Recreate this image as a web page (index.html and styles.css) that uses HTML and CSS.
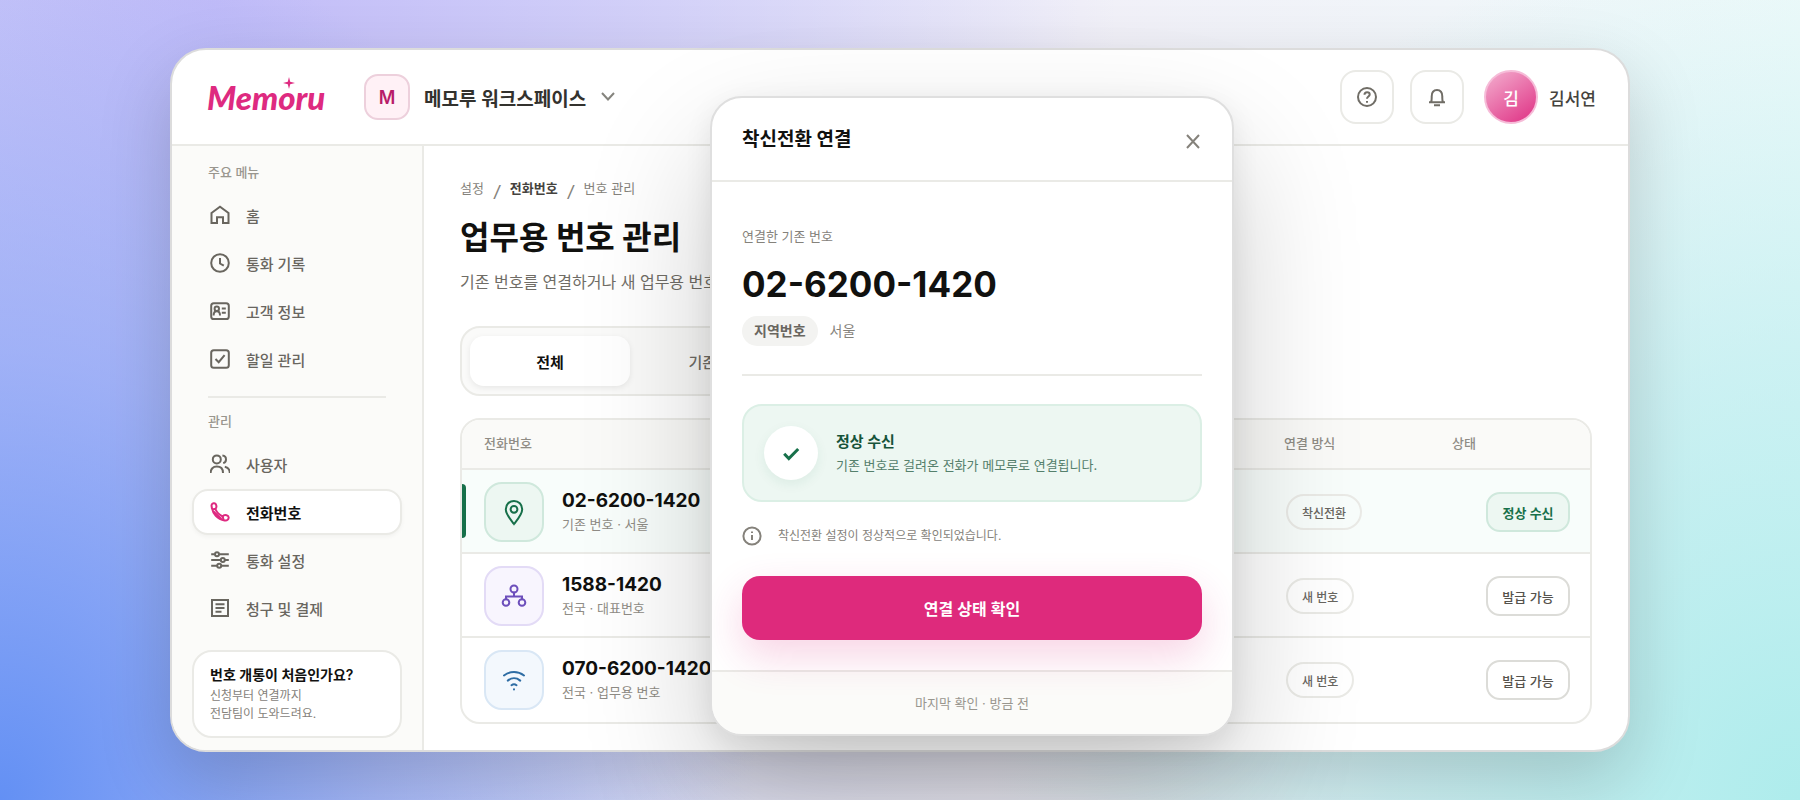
FILE: index.html
```html
<!DOCTYPE html>
<html lang="ko">
<head>
    <meta charset="UTF-8">
    <meta name="viewport" content="width=device-width, initial-scale=1.0">
    <title>Memoru</title>
    <link rel="stylesheet" href="styles.css">
</head>
<body>

    <div class="window">
        <header class="topbar">
            <a class="logo" href="#">Mem<span class="logo-o">o<svg class="spark" viewBox="0 0 12 12"><path d="M6 0 7.200 4.800 12 6 7.200 7.200 6 12 4.800 7.200 0 6 4.800 4.800z"/></svg></span>ru</a>
            <button class="workspace" type="button">
                <span class="badge">M</span>
                <span>메모루 워크스페이스</span>
                <svg class="chevron" viewBox="0 0 16 16"><path d="M2 4 8 10.500 14 4"/></svg>
            </button>
            <div class="actions">
                <button class="icon-btn" type="button" aria-label="도움말">
                    <svg class="icon" viewBox="0 0 20 20"><circle cx="10" cy="10" r="9"/><path d="M7.500 7.800c0-1.500 1.100-2.500 2.600-2.500s2.600 1 2.600 2.300c0 1.900-2.700 2-2.700 4.100"/><path d="M10 14v1.800"/></svg>
                </button>
                <button class="icon-btn" type="button" aria-label="알림">
                    <svg class="icon" viewBox="0 0 20 20"><path d="M2 15.200h16M4 15c.9-1.500.7-3 .7-5.500C4.700 5.500 6.800 3 10 3s5.300 2.500 5.300 6.500c0 2.500-.2 4 .7 5.500M7 18.200h6"/></svg>
                </button>
                <a class="user" href="#"><span class="avatar">김</span>김서연</a>
            </div>
        </header>

        <div class="layout">
            <aside class="sidebar">
                <h2 class="menu-label">주요 메뉴</h2>
                <nav class="menu">
                    <a href="#"><svg class="icon" viewBox="0 0 20 20"><path d="M1.500 8 10 1.800 18.500 8v10H13v-5.800H7V18H1.500z"/></svg>홈</a>
                    <a href="#"><svg class="icon" viewBox="0 0 20 20"><circle cx="10" cy="10" r="8.800"/><path d="M10 5v5.500l3.800 2.200"/></svg>통화 기록</a>
                    <a href="#"><svg class="icon" viewBox="0 0 20 20"><rect x="1.200" y="2.200" width="17.600" height="15.800" rx="2.600"/><circle cx="6.800" cy="7.800" r="2.200"/><path d="M3.600 14.500c0-2.800 1.300-4.300 3.200-4.300s3.200 1.500 3.200 4.300M11.800 7.500h4M11.800 11.800h4"/></svg>고객 정보</a>
                    <a href="#"><svg class="icon" viewBox="0 0 20 20"><rect x="1.200" y="1.200" width="17.600" height="17.600" rx="2.600"/><path d="m5.500 10 3.200 3.200 5.900-7"/></svg>할일 관리</a>
                </nav>
                <hr>
                <h2 class="menu-label">관리</h2>
                <nav class="menu">
                    <a href="#"><svg class="icon" viewBox="0 0 20 20"><circle cx="6.800" cy="5.400" r="4"/><path d="M.6 19c0-4.200 2.500-6.400 6.200-6.400S13 14.800 13 19M12.400 1.600c2.200.2 3.600 1.800 3.600 3.800s-1.200 3.200-2.800 3.700M14.800 12.800c3.200.7 5 2.900 5 6.200"/></svg>사용자</a>
                    <a class="active" href="#"><svg class="icon" viewBox="0 0 20 20"><path d="M1.600 4.200c-.3-1.400.5-2.800 2-3 1.300-.2 2.300.6 2.700 2.200.4 1.700.1 2.700-1 3.500 1.400 3.300 4 6 7.400 7.600.9-1.500 2.200-1.700 3.900-1.200 1.600.5 2.300 1.500 2 2.800-.4 1.700-2 2.600-4 2.300C7.500 17.400 2.500 11.800 1.600 4.200z"/><path d="M2.500 7.200 5.300 6.900M12.700 14.500l.9 3.400M3.500 9.500l8 7.500"/></svg>전화번호</a>
                    <a href="#"><svg class="icon" viewBox="0 0 20 20"><path d="M1.200 4.200h3.600M9.200 4.200h9.600M1.200 10h9.400M15 10h3.800M1.200 15.800H7M11.400 15.800h7.400"/><circle cx="7" cy="4.200" r="2"/><circle cx="12.800" cy="10" r="2"/><circle cx="9.200" cy="15.800" r="2"/></svg>통화 설정</a>
                    <a href="#"><svg class="icon" viewBox="0 0 20 20"><path d="M2 2h16v16H2zM5.500 6.300h9M5.500 10h9M5.500 13.700h6"/></svg>청구 및 결제</a>
                </nav>
                <a class="help-card" href="#">
                    <strong>번호 개통이 처음인가요?</strong>
                    <span>신청부터 연결까지<br>전담팀이 도와드려요.</span>
                </a>
            </aside>

            <main class="content">
                <nav class="breadcrumb"><a href="#">설정</a><i>/</i><a class="current" href="#">전화번호</a><i>/</i><a href="#">번호 관리</a></nav>
                <h1>업무용 번호 관리</h1>
                <p class="lead">기존 번호를 연결하거나 새 업무용 번호를 신청하세요.</p>
                <div class="tabs">
                    <button class="tab selected" type="button">전체</button>
                    <button class="tab" type="button">기존 번호</button>
                    <button class="tab" type="button">새 번호</button>
                </div>

                <table class="numbers">
                    <thead>
                        <tr><th>전화번호</th><th class="col-method">연결 방식</th><th class="col-status">상태</th></tr>
                    </thead>
                    <tbody>
                        <tr class="current-row">
                            <td>
                                <div class="number">
                                    <span class="tile green"><svg viewBox="0 0 28 28"><path d="M14 26C10.500 21.500 5.800 16.500 5.800 11.300 5.800 6.400 9.400 3 14 3s8.200 3.400 8.200 8.300C22.200 16.500 17.500 21.500 14 26z"/><circle cx="14" cy="11.300" r="3.400"/></svg></span>
                                    <div><strong>02-6200-1420</strong><small>기존 번호 · 서울</small></div>
                                </div>
                            </td>
                            <td><span class="pill">착신전환</span></td>
                            <td class="status"><button class="status-btn ok" type="button">정상 수신</button></td>
                        </tr>
                        <tr>
                            <td>
                                <div class="number">
                                    <span class="tile purple"><svg viewBox="0 0 28 28"><circle cx="14" cy="7" r="3.500"/><circle cx="6" cy="20.500" r="3.300"/><circle cx="22" cy="20.500" r="3.300"/><path d="M14 10.500v4M6 17.200v-2.700h16v2.700"/></svg></span>
                                    <div><strong>1588-1420</strong><small>전국 · 대표번호</small></div>
                                </div>
                            </td>
                            <td><span class="pill">새 번호</span></td>
                            <td class="status"><button class="status-btn" type="button">발급 가능</button></td>
                        </tr>
                        <tr>
                            <td>
                                <div class="number">
                                    <span class="tile blue"><svg viewBox="0 0 28 28"><path d="M4 9.500c6-4.600 14-4.600 20 0M7.800 14.600c3.700-3 8.700-3 12.400 0M11.500 19.200c1.500-1.200 3.500-1.200 5 0M14 23.200v.3"/></svg></span>
                                    <div><strong>070-6200-1420</strong><small>전국 · 업무용 번호</small></div>
                                </div>
                            </td>
                            <td><span class="pill">새 번호</span></td>
                            <td class="status"><button class="status-btn" type="button">발급 가능</button></td>
                        </tr>
                    </tbody>
                </table>
            </main>
        </div>

        <section class="modal" role="dialog" aria-labelledby="modal-title">
            <header class="modal-head">
                <h2 id="modal-title">착신전환 연결</h2>
                <button class="close" type="button" aria-label="닫기"><svg viewBox="0 0 18 18"><path d="m3 3 12 13M15 3 3 16"/></svg></button>
            </header>
            <div class="modal-body">
                <p class="field-label">연결한 기존 번호</p>
                <p class="big-number">02-6200-1420</p>
                <p class="region"><span>지역번호</span>서울</p>
                <div class="notice">
                    <span class="check"><svg viewBox="0 0 20 20"><path d="m3.200 10.800 4.600 4.800 9.400-9.600"/></svg></span>
                    <div>
                        <strong>정상 수신</strong>
                        <p>기존 번호로 걸려온 전화가 메모루로 연결됩니다.</p>
                    </div>
                </div>
                <p class="info"><svg viewBox="0 0 20 20"><circle cx="10" cy="10" r="8.600"/><path d="M10 9v5M10 5.500v1.500"/></svg>착신전환 설정이 정상적으로 확인되었습니다.</p>
                <button class="primary" type="button">연결 상태 확인</button>
            </div>
            <footer class="modal-foot">마지막 확인 · 방금 전</footer>
        </section>
    </div>

</body>
</html>
```
FILE: styles.css
```css
*{
    box-sizing: border-box;
    margin: 0;
}

body{
    min-height: 100vh;
    padding: 48px 170px;
    display: flex;
    font-family: Inter, "Noto Sans CJK KR", sans-serif;
    font-size: 15px;
    color: #11110f;
    background:
        radial-gradient(ellipse 42% 110% at 0% 100%, #6390f4 0%, rgba(130, 160, 245, 0.6) 50%, rgba(160, 170, 245, 0) 100%),
        radial-gradient(ellipse 45% 110% at 100% 100%, #aeecec 0%, rgba(180, 236, 238, 0.6) 50%, rgba(220, 245, 247, 0) 100%),
        radial-gradient(ellipse 50% 120% at 12% 0%, #c2bcf8 0%, rgba(200, 196, 248, 0.8) 35%, rgba(230, 228, 248, 0) 100%),
        linear-gradient(90deg, #d2d6fb 0%, #f1f0f8 60%, #f0fafa 100%);
}

a{
    color: inherit;
    text-decoration: none;
}

button{
    font: inherit;
    color: inherit;
    background: none;
    border: 0;
    padding: 0;
    cursor: pointer;
}

svg{
    fill: none;
    stroke: currentColor;
    stroke-width: 2;
    flex: none;
}

.icon{
    width: 20px;
    height: 20px;
}

.window{
    position: relative;
    flex: 1;
    display: flex;
    flex-direction: column;
    border: 2px solid #dcdcdc;
    border-radius: 36px;
    background: #fff;
    box-shadow: 0 28px 72px rgba(0, 0, 0, 0.18);
}

/* top bar */
.topbar{
    height: 96px;
    padding: 0 32px 0 35px;
    display: flex;
    align-items: center;
    border-bottom: 2px solid #eaeae6;
}

.logo{
    width: 157px;
    font-family: Lato, sans-serif;
    font-size: 33px;
    line-height: 40px;
    font-weight: 900;
    font-style: italic;
    color: #de2a80;
}

.logo-o{
    position: relative;
}

.spark{
    position: absolute;
    left: 5px;
    top: 0;
    width: 12px;
    height: 12px;
    fill: #de2a80;
    stroke: none;
}

.workspace{
    display: flex;
    align-items: center;
    gap: 14px;
    font-size: 19px;
    font-weight: 600;
    color: #33322e;
}

.badge{
    width: 46px;
    height: 46px;
    display: grid;
    place-items: center;
    border: 2px solid #edd0dc;
    border-radius: 14px;
    background: #fff1f6;
    font-size: 18px;
    color: #b81c69;
}

.chevron{
    width: 16px;
    height: 16px;
    color: #85847e;
}

.actions{
    margin-left: auto;
    display: flex;
    align-items: center;
    gap: 16px;
}

.icon-btn{
    width: 54px;
    height: 54px;
    display: grid;
    place-items: center;
    border: 2px solid #eaeae6;
    border-radius: 16px;
    color: #706d66;
}

.user{
    margin-left: 4px;
    display: flex;
    align-items: center;
    gap: 11px;
    font-size: 17px;
    font-weight: 500;
    color: #45433e;
}

.avatar{
    width: 54px;
    height: 54px;
    display: grid;
    place-items: center;
    border: 2px solid #f6bcd8;
    border-radius: 50%;
    background: linear-gradient(145deg, #f4b4d2, #de2a80);
    background-origin: border-box;
    color: #fff;
}

.layout{
    flex: 1;
    display: flex;
}

/* sidebar */
.sidebar{
    width: 252px;
    padding: 16px 20px 12px;
    display: flex;
    flex-direction: column;
    border-right: 2px solid #eaeae6;
    border-bottom-left-radius: 34px;
    background: #fbfbf9;
}

.menu-label{
    padding: 0 16px;
    margin-bottom: 10px;
    font-size: 13px;
    line-height: 20px;
    font-weight: 500;
    color: #99968e;
}

.menu{
    display: flex;
    flex-direction: column;
    gap: 2px;
}

.menu a{
    height: 46px;
    padding: 0 16px;
    display: flex;
    align-items: center;
    gap: 16px;
    border: 2px solid transparent;
    border-radius: 16px;
    font-weight: 500;
    color: #69665f;
}

.menu .active{
    background: #fff;
    border-color: #eaeae6;
    box-shadow: 0 2px 4px rgba(0, 0, 0, 0.04);
    font-weight: 600;
    color: #11110f;
}

.active .icon{
    color: #de2a80;
}

.sidebar hr{
    margin: 14px 16px 13px;
    border: 0;
    border-top: 2px solid #eaeae6;
}

.help-card{
    margin-top: auto;
    padding: 11px 16px 13px;
    display: block;
    border: 2px solid #eaeae6;
    border-radius: 20px;
    background: #fff;
    font-size: 12px;
    line-height: 18px;
    color: #85827b;
}

.help-card strong{
    display: block;
    font-size: 14px;
    line-height: 24px;
    font-weight: 600;
    color: #11110f;
}

/* main content */
.content{
    flex: 1;
    min-width: 0;
    padding: 32px 36px 26px;
}

.breadcrumb{
    display: flex;
    gap: 10px;
    font-size: 13px;
    line-height: 20px;
    color: #85827b;
}

.breadcrumb i{
    font-size: 16px;
    line-height: 26px;
    height: 20px;
    font-weight: 500;
}

.breadcrumb .current{
    font-weight: 600;
    color: #45433e;
}

h1{
    margin: 20px 0 12px;
    font-size: 32px;
    line-height: 40px;
    font-weight: 700;
}

.lead{
    font-size: 16px;
    line-height: 24px;
    color: #706d66;
}

.tabs{
    width: fit-content;
    margin: 32px 0 22px;
    padding: 8px;
    display: flex;
    gap: 8px;
    border: 2px solid #eaeae6;
    border-radius: 20px;
    background: #fafaf9;
}

.tab{
    width: 160px;
    height: 50px;
    border-radius: 14px;
    font-weight: 500;
    color: #706d66;
}

.selected{
    background: #fff;
    box-shadow: 0 2px 6px rgba(0, 0, 0, 0.08);
    font-weight: 600;
    color: #11110f;
}

.numbers{
    width: 100%;
    table-layout: fixed;
    border: 2px solid #eaeae6;
    border-radius: 20px;
    border-spacing: 0;
    overflow: hidden;
}

th{
    height: 50px;
    padding: 0 0 4px;
    border-bottom: 2px solid #eaeae6;
    background: #fafaf8;
    text-align: left;
    font-size: 13px;
    font-weight: 500;
    color: #8f8c85;
}

td{
    padding: 12px 0 10px;
    border-bottom: 2px solid #eaeae6;
}

th:first-child,
td:first-child{
    padding-left: 22px;
}

tr:last-child td{
    padding-bottom: 12px;
    border-bottom: 0;
}

.col-method{
    width: 168px;
}

.col-status{
    width: 138px;
}

.current-row td{
    position: relative;
    background: #f8fdfb;
}

.current-row td:first-child::before{
    content: "";
    position: absolute;
    left: 0;
    top: 14px;
    bottom: 14px;
    width: 4px;
    border-radius: 0 4px 4px 0;
    background: #17704a;
}

.number{
    display: flex;
    align-items: center;
    gap: 18px;
}

.number strong{
    display: block;
    font-size: 19px;
    line-height: 24px;
    font-weight: 700;
}

.number small{
    display: block;
    font-size: 13px;
    line-height: 22px;
    color: #8f8c85;
}

.tile{
    width: 60px;
    height: 60px;
    display: grid;
    place-items: center;
    border: 2px solid;
    border-radius: 18px;
}

.tile svg{
    width: 28px;
    height: 28px;
    stroke-linecap: round;
}

.green{
    background: #edf7f2;
    border-color: #cfe8dc;
    color: #17704a;
}

.purple{
    background: #f8f5fe;
    border-color: #e3dbf6;
    color: #6d4fbb;
}

.blue{
    background: #f3f8fd;
    border-color: #d9e7f5;
    color: #2e6da4;
}

.pill{
    height: 36px;
    padding: 0 14px;
    margin-left: 2px;
    display: inline-flex;
    align-items: center;
    border: 2px solid #eaeae6;
    border-radius: 18px;
    font-size: 12px;
    font-weight: 500;
    color: #69665f;
}

.status{
    padding-right: 20px;
    text-align: right;
}

.status-btn{
    width: 84px;
    height: 40px;
    border: 2px solid #dcdcd8;
    border-radius: 14px;
    background: #fff;
    font-size: 13px;
    font-weight: 500;
    color: #55524c;
}

.ok{
    background: #edf7f2;
    border-color: #cfe8dc;
    font-weight: 600;
    color: #17704a;
}

/* call forwarding dialog, floats over the window */
.modal{
    position: absolute;
    top: 46px;
    left: 538px;
    width: 524px;
    border: 2px solid #dfdfdf;
    border-radius: 32px;
    background: #fff;
    overflow: hidden;
    box-shadow: 0 56px 130px rgba(0, 0, 0, 0.2), 0 8px 28px rgba(0, 0, 0, 0.08);
}

.modal-head{
    height: 84px;
    padding: 0 30px;
    display: flex;
    align-items: center;
    justify-content: space-between;
    border-bottom: 2px solid #eaeae6;
}

.modal-head h2{
    padding-bottom: 4px;
    font-size: 19px;
    font-weight: 700;
}

.close{
    padding-top: 4px;
}

.close svg{
    display: block;
    width: 18px;
    height: 18px;
    color: #85827b;
}

.modal-body{
    padding: 43px 30px 30px;
}

.field-label{
    font-size: 13px;
    line-height: 22px;
    color: #85827b;
}

.big-number{
    margin: 15px 0 10px;
    font-size: 35px;
    line-height: 44px;
    font-weight: 700;
}

.region{
    padding-bottom: 28px;
    display: flex;
    align-items: center;
    gap: 12px;
    border-bottom: 2px solid #eaeae6;
    font-size: 14px;
    line-height: 30px;
    color: #85827b;
}

.region span{
    padding: 0 12px;
    border-radius: 15px;
    background: #f3f3f1;
    font-weight: 600;
    color: #69665f;
}

.notice{
    height: 98px;
    margin: 28px 0 24px;
    padding: 0 20px;
    display: flex;
    align-items: center;
    gap: 18px;
    border: 2px solid #dbefe5;
    border-radius: 20px;
    background: #edf7f2;
    color: #55806c;
}

.notice strong{
    display: block;
    font-size: 15px;
    line-height: 24px;
    font-weight: 700;
    color: #17543a;
}

.notice p{
    font-size: 13px;
    line-height: 22px;
}

.check{
    width: 54px;
    height: 54px;
    display: grid;
    place-items: center;
    border-radius: 50%;
    background: #fff;
    box-shadow: 0 4px 12px rgba(23, 112, 74, 0.08);
    color: #17704a;
}

.check svg{
    width: 20px;
    height: 20px;
    stroke-width: 3;
}

.info{
    display: flex;
    align-items: center;
    gap: 16px;
    font-size: 12px;
    line-height: 20px;
    color: #85827b;
}

.info svg{
    width: 20px;
    height: 20px;
}

.primary{
    width: 100%;
    height: 64px;
    margin-top: 30px;
    border-radius: 18px;
    background: #de2a7c;
    box-shadow: 0 16px 40px rgba(222, 42, 124, 0.2);
    font-size: 16px;
    font-weight: 600;
    color: #fff;
}

.modal-foot{
    padding: 20px;
    border-top: 2px solid #eaeae6;
    background: rgba(248, 248, 245, 0.6);
    text-align: center;
    font-size: 13px;
    line-height: 22px;
    color: #99968e;
}
```
